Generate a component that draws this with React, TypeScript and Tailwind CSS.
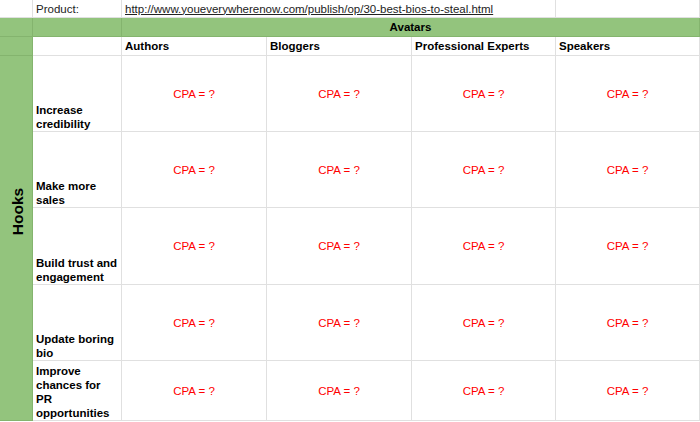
const avatars = ["Authors", "Bloggers", "Professional Experts", "Speakers"]

const hooks = [
  ["Increase", "credibility"],
  ["Make more", "sales"],
  ["Build trust and", "engagement"],
  ["Update boring", "bio"],
  ["Improve", "chances for", "PR", "opportunities"],
]

const white = "border-r border-b border-[#e0e0e0] bg-white"
const green = "border-r border-b border-[#84b46e] bg-[#93c47d]"

export default function App() {
  return (
    <div className="h-[422px] w-[700px] overflow-hidden bg-white font-['Liberation_Sans',Arial,sans-serif] text-[11.5px] leading-[14px] text-black">
      <div className="grid grid-cols-[33px_89px_145px_145px_144px_144px] grid-rows-[18px_19px_19px_76px_76px_77px_76px_60px]">
        {/* product row */}
        <div className={white} />
        <div className={`${white} flex items-center pl-[3px] text-[#222]`}>Product:</div>
        <div className={`${white} col-span-3 flex items-center pl-[3px] text-[#222] underline whitespace-nowrap`}>
          http://www.youeverywherenow.com/publish/op/30-best-bios-to-steal.html
        </div>
        <div className={white} />

        {/* avatars row */}
        <div className={green} />
        <div className={green} />
        <div className={`${green} col-span-4 flex items-center justify-center font-bold`}>Avatars</div>

        {/* header row */}
        <div className={green} />
        <div className={white} />
        {avatars.map((a) => (
          <div key={a} className={`${white} flex items-center pl-[3px] font-bold`}>
            {a}
          </div>
        ))}

        {/* hooks */}
        <div className={`${green} row-span-5 flex items-center justify-center pb-[53px]`}>
          <span className="-rotate-90 whitespace-nowrap pt-[5px] text-[15.5px] leading-[18px] font-bold">Hooks</span>
        </div>
        {hooks.map((lines, i) => (
          <>
            <div key={`h${i}`} className={`${white} col-start-2 flex flex-col justify-end pl-[3px] font-bold`}>
              {lines.map((l) => (
                <div key={l}>{l}</div>
              ))}
            </div>
            {avatars.map((a) => (
              <div key={`${i}${a}`} className={`${white} flex items-center justify-center text-[#ff0000]`}>
                CPA = ?
              </div>
            ))}
          </>
        ))}
      </div>
    </div>
  )
}
